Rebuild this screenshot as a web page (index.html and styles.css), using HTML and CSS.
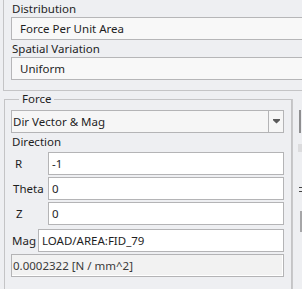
FILE: index.html
```html
<!DOCTYPE html>
<html lang="en">

<head>
    <meta charset="UTF-8">
    <title>Load Properties</title>
    <link rel="stylesheet" href="styles.css">
</head>

<body>
    <div class="top-panel">
        <span class="caption">Distribution</span>
        <div class="field">Force Per Unit Area</div>
        <span class="caption">Spatial Variation</span>
        <div class="field">Uniform</div>
    </div>

    <div class="lower">
        <fieldset class="group">
            <legend>Force</legend>
            <div class="combo">
                <span class="combo-text">Dir Vector &amp; Mag</span>
                <span class="combo-btn">
                    <svg width="7" height="5" viewBox="0 0 7 5"><path d="M0 0H7V1.2L3.5 4.6L0 1.2Z" fill="#5a5a5a"/></svg>
                </span>
            </div>
            <span class="caption">Direction</span>
            <div class="row">
                <label class="row-label label-r">R</label>
                <div class="input">-1</div>
            </div>
            <div class="row">
                <label class="row-label label-theta">Theta</label>
                <div class="input">0</div>
            </div>
            <div class="row">
                <label class="row-label label-z">Z</label>
                <div class="input">0</div>
            </div>
            <div class="row row-mag">
                <label class="row-label label-mag">Mag</label>
                <div class="input">LOAD/AREA:FID_79</div>
            </div>
            <div class="result">0.0002322 [N / mm^2]</div>
        </fieldset>

        <!-- panneau voisin, coupé par le bord de la fenêtre -->
        <div class="side">
            <div class="stub-box"></div>
            <div class="stub-light"></div>
            <div class="stub-dash"></div>
            <div class="stub-dash stub-dash-2"></div>
            <div class="stub-bar"></div>
        </div>
    </div>
</body>

</html>
```

FILE: styles.css
```css
* {
    box-sizing: border-box;
}

body {
    margin: 0;
    width: 302px;
    height: 289px;
    overflow: hidden;
    background: #eeeff2;
    font-family: 'Noto Sans', sans-serif;
    font-size: 11.5px;
    color: #1e1e1e;
}

.top-panel {
    margin-left: 3px;
    border-left: 1px solid #c4c4c6;
    border-bottom: 1px solid #c4c4c6;
    padding: 0 0 10px 7px;
}

.caption {
    display: block;
    line-height: 17px;
    padding-left: 1px;
}

.field {
    height: 23px;
    border: 1px solid #b6b6b8;
    border-right: none;
    background: #f8f8f8;
    line-height: 21px;
    padding-left: 8px;
}

.lower {
    display: flex;
}

.group {
    margin: 0 0 0 4px;
    width: 289px;
    min-width: 0;
    border: 1px solid #c4c4c6;
    padding: 3px 7px 7px 6px;
}

.group legend {
    margin-left: 8px;
    padding: 0 3px;
    line-height: 16px;
}

.combo {
    display: flex;
    height: 23px;
    border: 1px solid #b4b4b6;
    background: #f6f6f6;
}

.combo-text {
    flex: 1;
    line-height: 21px;
    padding-left: 1px;
}

.combo-btn {
    width: 15px;
    border-left: 1px solid #b4b4b6;
    display: flex;
    align-items: center;
    justify-content: center;
}

.row {
    display: flex;
    align-items: center;
    margin-top: 2px;
}

.row:first-of-type {
    margin-top: 0;
}

.row-mag {
    margin-top: 4px;
}

.row-label {
    width: 37px;
    flex: none;
}

.label-r {
    padding-left: 4px;
}

.label-theta {
    padding-left: 2px;
}

.label-z {
    padding-left: 5px;
}

.label-mag {
    width: 27px;
    padding-left: 1px;
}

.input {
    flex: 1;
    height: 23px;
    border: 1px solid #b4b4b6;
    background: #fff;
    line-height: 21px;
    padding-left: 3px;
}

.result {
    margin-top: 2px;
    height: 23px;
    border: 1px solid #b4b4b6;
    background: #f2f2f2;
    box-shadow: inset -1px -1px #fff;
    line-height: 21px;
    padding-left: 1px;
    color: #3a3a3a;
}

.side {
    flex: 1;
    margin-top: 8px;
    height: 200px;
    border-left: 1px solid #c8c8ca;
    padding-left: 6px;
}

.stub-box {
    margin-top: 11px;
    height: 23px;
    border-left: 2px solid #8e8e90;
}

.stub-light {
    margin: 11px 0 0 -1px;
    height: 8px;
    background: #dcdcde;
}

.stub-dash {
    margin-top: 35px;
    height: 1px;
    width: 3px;
    background: #444;
}

.stub-dash-2 {
    margin-top: 3px;
}

.stub-bar {
    margin: 19px 0 0 1px;
    height: 21px;
    width: 2px;
    background: #a6a6a8;
}
```
